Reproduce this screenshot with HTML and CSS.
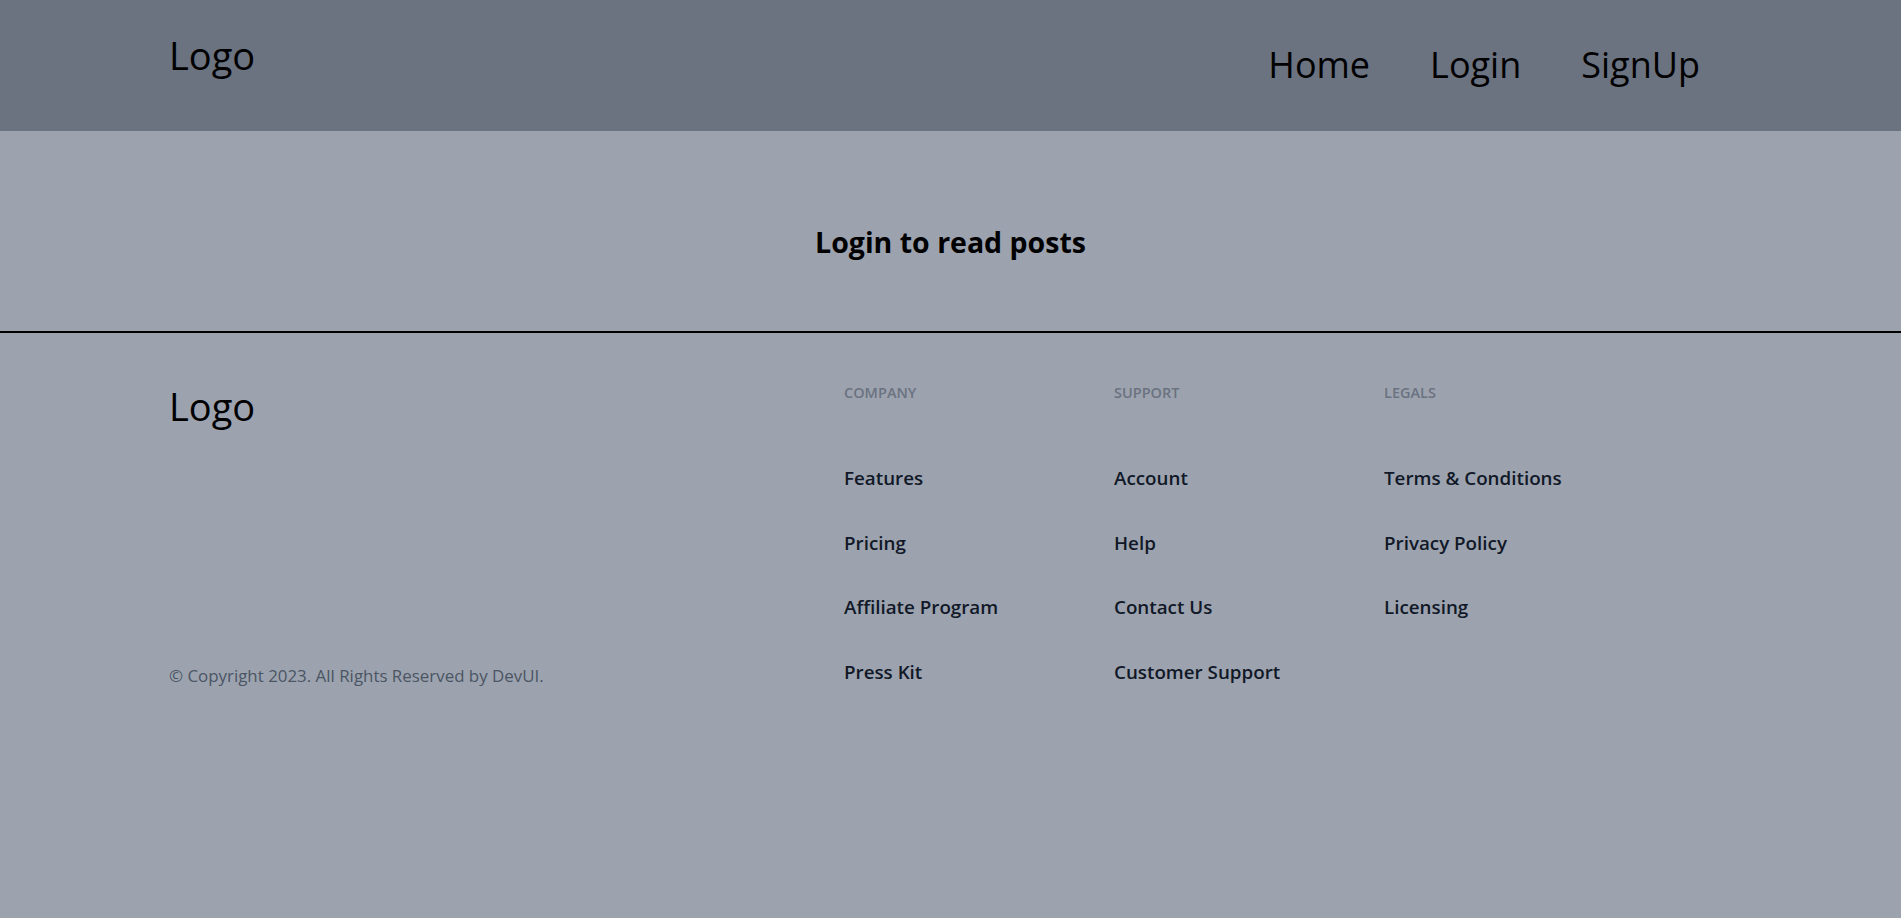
FILE: index.html
```html
<!DOCTYPE html>
<html lang="en">
<head>
<meta charset="utf-8">
<title>Posts</title>
<link rel="stylesheet" href="styles.css">
</head>
<body>
<header class="topbar">
  <div class="topbar-inner">
    <a class="brand" href="#">Logo</a>
    <nav class="nav">
      <a href="#">Home</a>
      <a href="#">Login</a>
      <a href="#">SignUp</a>
    </nav>
  </div>
</header>
<main class="main">
  <h1 class="notice">Login to read posts</h1>
</main>
<footer class="footer">
  <div class="footer-inner">
    <div class="footer-left">
      <a class="brand" href="#">Logo</a>
      <p class="copy">© Copyright 2023. All Rights Reserved by DevUI.</p>
    </div>
    <div class="footer-cols">
      <div class="col">
        <h2 class="col-title">Company</h2>
        <ul class="links">
          <li><a href="#">Features</a></li>
          <li><a href="#">Pricing</a></li>
          <li><a href="#">Affiliate Program</a></li>
          <li><a href="#">Press Kit</a></li>
        </ul>
      </div>
      <div class="col">
        <h2 class="col-title">Support</h2>
        <ul class="links">
          <li><a href="#">Account</a></li>
          <li><a href="#">Help</a></li>
          <li><a href="#">Contact Us</a></li>
          <li><a href="#">Customer Support</a></li>
        </ul>
      </div>
      <div class="col">
        <h2 class="col-title">Legals</h2>
        <ul class="links">
          <li><a href="#">Terms &amp; Conditions</a></li>
          <li><a href="#">Privacy Policy</a></li>
          <li><a href="#">Licensing</a></li>
        </ul>
      </div>
    </div>
  </div>
</footer>
</body>
</html>
```

FILE: styles.css
```css
* { box-sizing: border-box; }

html, body {
  margin: 0;
  padding: 0;
}

body {
  background: #9ca3af;
  font-family: "Open Sans", "Noto Sans", sans-serif;
  color: #000;
  min-height: 918px;
}

a { color: inherit; text-decoration: none; }

.topbar {
  background: #6b7280;
  height: 131px;
}

.topbar-inner {
  display: flex;
  justify-content: space-between;
  align-items: flex-start;
  padding: 31px 201px 0 169px;
}

.brand {
  font-size: 38px;
  line-height: 48px;
  font-weight: 400;
  color: #000;
  display: block;
}

.nav {
  display: flex;
  gap: 60px;
  padding-top: 10px;
}

.nav a {
  font-size: 36px;
  line-height: 48px;
}

.main {
  padding: 91px 0 69px;
  border-bottom: 2px solid #000;
}

.notice {
  margin: 0;
  text-align: center;
  font-size: 28.5px;
  line-height: 40px;
  font-weight: 700;
}

.footer-inner {
  display: flex;
  padding: 49px 0 0 169px;
}

.footer-left {
  flex: 1;
  display: flex;
  flex-direction: column;
  justify-content: space-between;
}

.copy {
  margin: 0;
  font-size: 16.9px;
  line-height: 20px;
  color: #4b5563;
}

.footer-cols {
  display: grid;
  grid-template-columns: repeat(3, 270px);
  padding-right: 247px;
}

.col-title {
  margin: 0 0 60px;
  font-size: 14.5px;
  line-height: 22px;
  font-weight: 600;
  text-transform: uppercase;
  color: #6b7280;
}

.links {
  list-style: none;
  margin: 0;
  padding: 0;
  display: flex;
  flex-direction: column;
  gap: 36.5px;
}

.links li {
  font-size: 18.8px;
  line-height: 28px;
  font-weight: 600;
  color: #111827;
}
```
